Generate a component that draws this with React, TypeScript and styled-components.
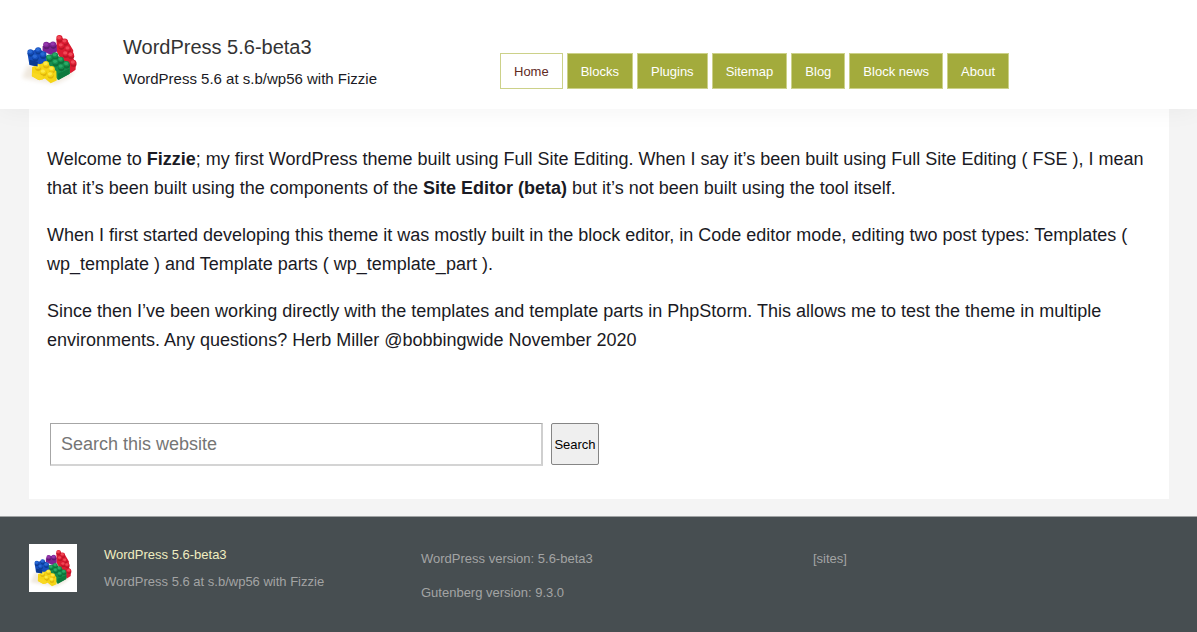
import React from 'react';
import styled, { createGlobalStyle } from 'styled-components';

const GlobalStyle = createGlobalStyle`
  *, *::before, *::after { box-sizing: border-box; }
  body {
    margin: 0;
    background: #f4f4f4;
    color: #1a1a24;
    font-family: Arial, 'Liberation Sans', sans-serif;
    font-size: 18px;
    line-height: 29px;
  }
  p, h1, h2 { margin: 0; font-weight: 400; }
`;

const Page = styled.div`
  display: flex;
  flex-direction: column;
  min-height: 100vh;
`;

const Header = styled.header`
  position: relative;
  z-index: 1;
  display: flex;
  align-items: flex-start;
  padding: 27px 20px 14px;
  background: #fff;
  box-shadow: 0 0 24px rgba(0, 0, 0, 0.05);
`;

const Brand = styled.div`
  display: flex;
  flex: 0 0 480px;
  gap: 39px;
`;

const LogoSvg = styled.svg<{ $size: number }>`
  display: block;
  flex: none;
  width: ${(p) => p.$size}px;
  height: ${(p) => p.$size}px;
  background: #fff;
`;

const SiteTitle = styled.h1`
  padding-top: 4px;
  font-size: 20px;
  line-height: 32px;

  a { color: #333; text-decoration: none; }
`;

const Tagline = styled.p`
  font-size: 15px;
  line-height: 32px;
`;

const Nav = styled.nav`
  display: flex;
  flex-wrap: wrap;
  gap: 4px;
  padding-top: 26px;
`;

const NavLink = styled.a<{ $current?: boolean }>`
  padding: 2px 13px 0;
  border: 1px solid #ccd189;
  background: ${(p) => (p.$current ? '#fff' : '#a3ab3c')};
  color: ${(p) => (p.$current ? '#612b1f' : '#fff')};
  font-size: 13px;
  line-height: 32px;
  text-decoration: none;
`;

const Main = styled.main`
  flex: 1;
  margin: 0 28px 17px 29px;
  padding: 36px 18px 33px;
  background: #fff;
`;

const Prose = styled.div`
  display: flex;
  flex-direction: column;
  gap: 18px;
`;

const SearchForm = styled.form`
  display: flex;
  gap: 8px;
  margin-top: 68px;
  padding-left: 3px;
`;

const SearchInput = styled.input`
  width: 493px;
  height: 43px;
  padding: 0 10px;
  border: 1px solid #a6a6a6;
  border-right: 2px solid #cfcfcf;
  border-bottom: 2px solid #d4d4d4;
  border-radius: 0;
  background: #fff;
  font: inherit;

  &::placeholder { color: #757575; opacity: 1; }
`;

const SearchButton = styled.button`
  width: 48px;
  height: 42px;
  padding: 0;
  border: 1px solid #858585;
  border-radius: 2px;
  background: #efefef;
  color: #000;
  font-family: inherit;
  font-size: 13px;
`;

const Footer = styled.footer`
  display: grid;
  grid-template-columns: repeat(3, 1fr);
  gap: 36px;
  padding: 27px 28px 25px 29px;
  border-top: 1px solid #a0a3a4;
  background: #474e51;
  color: #a3a4a4;
  font-size: 13px;
`;

const FooterBrand = styled.div`
  display: flex;
  gap: 27px;
`;

const FooterTitle = styled.h2`
  font-size: 13px;
  line-height: 22px;

  a { color: #f0edc0; text-decoration: none; }
`;

const FooterTagline = styled.p`
  line-height: 32px;
`;

const FooterColumn = styled.div`
  display: flex;
  flex-direction: column;
  gap: 5px;
`;

type Brick = { body: string; fill: string; side: string; stud: string; studs: [number, number][] };

const bricks: Brick[] = [
  {
    body: 'M97 78 L118 68 L140 74 L140 94 L122 104 L97 92Z',
    fill: '#7c2493', side: '#5d1a72', stud: '#9438ac',
    studs: [[108, 73], [128, 72]],
  },
  {
    body: 'M138 56 L150 52 L170 60 L188 90 L187 112 L196 128 L195 148 L180 158 L160 134 L140 96Z',
    fill: '#dc1c32', side: '#bb1428', stud: '#f04a58',
    studs: [[147, 53], [163, 63], [152, 75], [172, 84], [165, 99], [181, 103], [188, 126]],
  },
  {
    body: 'M52 98 L80 86 L108 96 L110 124 L84 138 L58 134Z',
    fill: '#1650bd', side: '#0e3c94', stud: '#2c6bd6',
    studs: [[84, 89], [61, 95], [98, 102], [75, 109]],
  },
  {
    body: 'M108 108 L132 100 L178 132 L178 160 L143 178 L112 142Z',
    fill: '#148c4d', side: '#0c6f38', stud: '#2bab67',
    studs: [[134, 104], [117, 111], [151, 117], [135, 124], [168, 130], [152, 138]],
  },
  {
    body: 'M66 140 L106 126 L138 152 L139 180 L121 188 L104 174 L88 179 L65 167Z',
    fill: '#f6d516', side: '#e0b60c', stud: '#fdea4a',
    studs: [[107, 130], [83, 138], [124, 145], [99, 153], [120, 161]],
  },
];

const BrickLogo = ({ size }: { size: number }) => (
  <LogoSvg $size={size} viewBox="30 21 190 190" role="img" aria-label="Building bricks">
    <defs>
      <filter id={`shadow-${size}`} x="-20%" y="-20%" width="140%" height="140%">
        <feGaussianBlur stdDeviation="6" />
      </filter>
      <filter id={`edge-${size}`}>
        <feGaussianBlur stdDeviation="1.5" />
      </filter>
    </defs>
    <path d="M36 172 L54 132 L110 160 L194 150 L176 170 L136 190 L90 182Z" fill="#efe8de" filter={`url(#shadow-${size})`} />
    <g filter={`url(#edge-${size})`}>
      {bricks.map((b) => (
        <g key={b.fill}>
          <path d={b.body} fill={b.fill} />
          {b.studs.map(([x, y]) => (
            <g key={`${x}-${y}`}>
              <ellipse cx={x + 1} cy={y + 5} rx="9" ry="9" fill={b.side} />
              <ellipse cx={x} cy={y} rx="9" ry="8" fill={b.fill} />
              <ellipse cx={x - 1} cy={y - 1} rx="6" ry="5" fill={b.stud} />
            </g>
          ))}
        </g>
      ))}
      <path d="M58 118 L83 124 L82 138 L59 133Z" fill="#0e3a90" />
      <path d="M143 160 L177 145 L177 160 L144 178Z" fill="#0c7a3c" />
      <path d="M66 155 L98 165 L98 177 L84 178 L66 167Z" fill="#f9d820" />
    </g>
  </LogoSvg>
);

const links = ['Home', 'Blocks', 'Plugins', 'Sitemap', 'Blog', 'Block news', 'About'];

export default function App() {
  return (
    <Page>
      <GlobalStyle />
      <Header>
        <Brand>
          <BrickLogo size={64} />
          <div>
            <SiteTitle><a href="#home">WordPress 5.6-beta3</a></SiteTitle>
            <Tagline>WordPress 5.6 at s.b/wp56 with Fizzie</Tagline>
          </div>
        </Brand>
        <Nav aria-label="Main">
          {links.map((label, i) => (
            <NavLink key={label} href={`#${label}`} $current={i === 0} aria-current={i === 0 ? 'page' : undefined}>
              {label}
            </NavLink>
          ))}
        </Nav>
      </Header>
      <Main>
        <Prose>
          <p>
            Welcome to <strong>Fizzie</strong>; my first WordPress theme built using Full Site Editing. When I say
            it’s been built using Full Site Editing ( FSE ), I mean that it’s been built using the components of
            the <strong>Site Editor (beta)</strong> but it’s not been built using the tool itself.
          </p>
          <p>
            When I first started developing this theme it was mostly built in the block editor, in Code editor mode,
            editing two post types: Templates ( wp_template ) and Template parts ( wp_template_part ).
          </p>
          <p>
            Since then I’ve been working directly with the templates and template parts in PhpStorm. This allows me
            to test the theme in multiple environments. Any questions? Herb Miller @bobbingwide November 2020
          </p>
        </Prose>
        <SearchForm role="search" onSubmit={(e) => e.preventDefault()}>
          <SearchInput type="search" aria-label="Search this website" placeholder="Search this website" />
          <SearchButton type="submit">Search</SearchButton>
        </SearchForm>
      </Main>
      <Footer>
        <FooterBrand>
          <BrickLogo size={48} />
          <div>
            <FooterTitle><a href="#home">WordPress 5.6-beta3</a></FooterTitle>
            <FooterTagline>WordPress 5.6 at s.b/wp56 with Fizzie</FooterTagline>
          </div>
        </FooterBrand>
        <FooterColumn>
          <p>WordPress version: 5.6-beta3</p>
          <p>Gutenberg version: 9.3.0</p>
        </FooterColumn>
        <FooterColumn>
          <p>[sites]</p>
        </FooterColumn>
      </Footer>
    </Page>
  );
}
